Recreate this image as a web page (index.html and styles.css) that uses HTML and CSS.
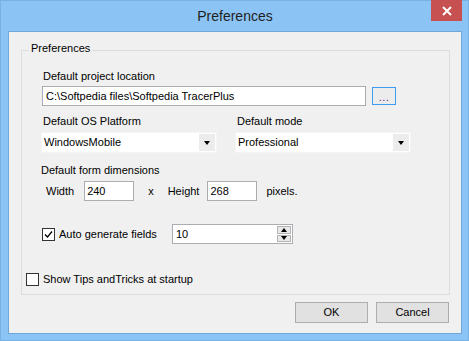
FILE: index.html
```html
<!DOCTYPE html>
<html lang="en">
<head>
    <meta charset="UTF-8">
    <title>Preferences</title>
    <link rel="stylesheet" href="styles.css">
</head>
<body>
    <div class="window">
        <div class="titlebar">
            <span></span>
            <div class="title">Preferences</div>
            <div class="close-btn">
                <svg width="10" height="10" viewBox="0 0 10 10"><path d="M1 1 L9 9 M9 1 L1 9" stroke="#fff" stroke-width="2"/></svg>
            </div>
        </div>
        <div class="client">
            <div class="group">
                <div class="group-title">Preferences</div>

                <div class="field-label">Default project location</div>
                <div class="path-row">
                    <div class="textbox path-box">C:\Softpedia files\Softpedia TracerPlus</div>
                    <div class="browse-btn">...</div>
                </div>

                <div class="combo-labels">
                    <div class="field-label">Default OS Platform</div>
                    <div class="field-label">Default mode</div>
                </div>
                <div class="combo-row">
                    <div class="combo">
                        <span>WindowsMobile</span>
                        <span class="combo-arrow"><i class="tri-down"></i></span>
                    </div>
                    <div class="combo">
                        <span>Professional</span>
                        <span class="combo-arrow"><i class="tri-down"></i></span>
                    </div>
                </div>

                <div class="section-label">Default form dimensions</div>
                <div class="dims-row">
                    <span class="dim-width-label">Width</span>
                    <div class="textbox dim-box">240</div>
                    <span class="dim-x">x</span>
                    <span class="dim-height-label">Height</span>
                    <div class="textbox dim-box">268</div>
                    <span class="dim-unit">pixels.</span>
                </div>

                <div class="auto-row">
                    <div class="check-item auto-check">
                        <span class="checkbox">
                            <svg width="11" height="11" viewBox="0 0 11 11"><path d="M2 5.5 L4.5 8 L9 2.5" stroke="#000" stroke-width="1.3" fill="none"/></svg>
                        </span>
                        <span>Auto generate fields</span>
                    </div>
                    <div class="spinner">
                        <span class="spinner-value">10</span>
                        <span class="spin-btns">
                            <span class="spin-btn"><i class="tri-up"></i></span>
                            <span class="spin-btn"><i class="tri-down small"></i></span>
                        </span>
                    </div>
                </div>

                <div class="check-item tips-check">
                    <span class="checkbox"></span>
                    <span>Show Tips andTricks at startup</span>
                </div>
            </div>

            <div class="button-row">
                <div class="dlg-btn">OK</div>
                <div class="dlg-btn">Cancel</div>
            </div>
        </div>
    </div>
</body>
</html>
```

FILE: styles.css
```css
* {
    box-sizing: border-box;
}
body {
    margin: 0;
    font-family: 'Liberation Sans', Arial, sans-serif;
    font-size: 11px;
    line-height: 13px;
    color: #000;
    background-color: #8bc4f4;
}
.window {
    width: 469px;
    height: 341px;
    background-color: #8bc4f4;
    border: 1px solid #78b2e4;
}
.titlebar {
    height: 30px;
    display: grid;
    grid-template-columns: 1fr auto 1fr;
    align-items: center;
}
.title {
    font-size: 14px;
    color: #1e1e1e;
    line-height: 16px;
    padding-left: 1px;
}
.close-btn {
    justify-self: end;
    align-self: start;
    margin-top: -1px;
    margin-right: 6px;
    width: 31px;
    height: 21px;
    background-color: #c75050;
    display: flex;
    align-items: center;
    justify-content: center;
}
.client {
    width: 454px;
    height: 303px;
    margin-left: 7px;
    background-color: #f0f0f0;
    border: 1px solid #6fa7da;
}
.group {
    margin: 18px 11px 0 12px;
    border: 1px solid #dcdcdc;
    padding: 0 0 8px 20px;
}
.group-title {
    display: table;
    margin: -9px 0 0 -13px;
    padding: 0 2px;
    background-color: #f0f0f0;
}
.field-label {
    padding-left: 1px;
}
.group > .field-label {
    margin-top: 15px;
}
.textbox {
    background-color: #fff;
    border: 1px solid #abadb3;
    padding: 0 2px;
    height: 20px;
    line-height: 18px;
    white-space: nowrap;
}
.path-row {
    display: flex;
    align-items: flex-start;
    margin-top: 3px;
}
.path-box {
    width: 324px;
    padding-left: 3px;
}
.browse-btn {
    margin: 1px 0 0 6px;
    width: 24px;
    height: 18px;
    border: 1px solid #3c9cf2;
    background-color: #ececec;
    color: #6a1a8a;
    text-align: center;
    line-height: 18px;
    letter-spacing: 0.5px;
}
.combo-labels {
    display: grid;
    grid-template-columns: 194px auto;
    margin-top: 9px;
}
.combo-row {
    display: grid;
    grid-template-columns: 176px 176px;
    gap: 18px;
    margin: 4px 0 0 -1px;
}
.combo {
    height: 21px;
    background-color: #fff;
    border: 1px solid #f4f4f4;
    display: flex;
    align-items: center;
    justify-content: space-between;
    padding: 0 1px 0 2px;
}
.combo-arrow {
    width: 16px;
    height: 17px;
    background-color: #ececec;
    display: flex;
    align-items: center;
    justify-content: center;
}
.tri-down {
    width: 0;
    height: 0;
    border-left: 3.5px solid transparent;
    border-right: 3.5px solid transparent;
    border-top: 4px solid #000;
}
.tri-up {
    width: 0;
    height: 0;
    border-left: 3px solid transparent;
    border-right: 3px solid transparent;
    border-bottom: 4px solid #000;
}
.tri-down.small {
    border-left-width: 3px;
    border-right-width: 3px;
}
.section-label {
    margin: 11px 0 0 -1px;
}
.dims-row {
    display: flex;
    align-items: center;
    height: 20px;
    margin-top: 4px;
}
.dim-width-label {
    margin-left: 4px;
}
.dim-box {
    width: 50px;
}
.dims-row .dim-box:first-of-type {
    margin-left: 10px;
}
.dim-x {
    margin-left: 14px;
}
.dim-height-label {
    margin-left: 14px;
    margin-right: 8px;
}
.dim-unit {
    margin-left: 9px;
}
.auto-row {
    display: flex;
    align-items: center;
    margin-top: 23px;
    height: 20px;
}
.check-item {
    display: flex;
    align-items: center;
    gap: 4px;
}
.auto-check {
    width: 130px;
}
.checkbox {
    width: 13px;
    height: 13px;
    border: 1px solid #333;
    background-color: #fff;
    display: flex;
    align-items: center;
    justify-content: center;
}
.spinner {
    width: 121px;
    height: 20px;
    background-color: #fff;
    border: 1px solid #abadb3;
    display: flex;
    justify-content: space-between;
    padding-left: 3px;
    line-height: 18px;
}
.spin-btns {
    width: 15px;
    display: flex;
    flex-direction: column;
    padding: 1px 1px 1px 0;
    gap: 1px;
}
.spin-btn {
    flex: 1;
    background-color: #e8e8e8;
    border: 1px solid #b4b4b4;
    display: flex;
    align-items: center;
    justify-content: center;
}
.tips-check {
    margin: 29px 0 0 -16px;
}
.button-row {
    display: flex;
    justify-content: flex-end;
    gap: 8px;
    margin-top: 7px;
    padding-right: 12px;
}
.dlg-btn {
    width: 73px;
    height: 21px;
    background-color: #e1e1e1;
    border: 1px solid #adadad;
    text-align: center;
    line-height: 19px;
}
```
